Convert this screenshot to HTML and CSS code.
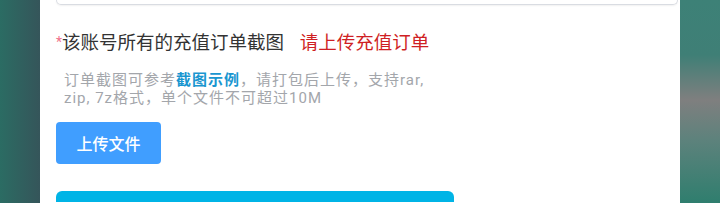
FILE: index.html
```html
<!DOCTYPE html>
<html lang="zh-CN">
<head>
    <meta charset="UTF-8">
    <meta name="viewport" content="width=device-width, initial-scale=1.0">
    <title>上传充值订单</title>
    <link rel="stylesheet" href="styles.css">
</head>
<body>
    <div class="backdrop">
        <div class="panel">
            <!-- bottom edge of the previous field, scrolled off -->
            <div class="prev-input"></div>

            <div class="field-title">
                <span class="star">*</span>该账号所有的充值订单截图
                <span class="warn">请上传充值订单</span>
            </div>

            <p class="hint">订单截图可参考<a href="#">截图示例</a>，请打包后上传，支持rar, zip, 7z格式，单个文件不可超过10M</p>

            <button class="upload-btn">上传文件</button>

            <div class="submit-bar"></div>
        </div>
    </div>
</body>
</html>
```

FILE: styles.css
```css
body {
    margin: 0;
    padding: 0;
    font-family: Roboto, "Noto Sans CJK SC", sans-serif;
    overflow: hidden;
}

.backdrop {
    display: flex;
    height: 203px;
    padding: 0 40px;
    overflow: hidden;
    background:
        linear-gradient(90deg, #2b6c63 0px, #35555a 40px, transparent 40px),
        linear-gradient(180deg, #3d8177 0px, #3f7f76 55px, #7f7f7f 100px, #5d827c 140px, #2f7e6e 203px);
}

.panel {
    flex: 1;
    display: flex;
    flex-direction: column;
    align-items: flex-start;
    background: #fff;
    padding: 0 2px 0 16px;
}

.panel > * {
    flex-shrink: 0;
}

.prev-input {
    align-self: stretch;
    height: 4px;
    border: 1px solid #d9dce2;
    border-top: none;
    border-radius: 0 0 5px 5px;
    box-shadow: 0 1px 2px rgba(0, 0, 0, 0.06);
}

.field-title {
    margin-top: 25px;
    font-size: 18.5px;
    line-height: 24px;
    color: #333;
}

.star {
    color: #f0708a;
    font-size: 14px;
    vertical-align: 2px;
}

.warn {
    margin-left: 11px;
    color: #cf1f24;
}

.hint {
    margin: 16px 0 0 8px;
    width: 368px;
    font-size: 15px;
    line-height: 18px;
    letter-spacing: 1px;
    color: #a3a6ab;
}

.hint a {
    color: #1a96d0;
    font-weight: 600;
    text-decoration: none;
}

.upload-btn {
    margin-top: 15px;
    width: 105px;
    height: 42px;
    border: none;
    border-radius: 4px;
    background: #409eff;
    color: #fff;
    font-family: "Noto Sans CJK SC", sans-serif;
    font-size: 16px;
    font-weight: 500;
    cursor: pointer;
}

/* submit button, cut off by the bottom of the view */
.submit-bar {
    margin-top: 27px;
    width: 398px;
    height: 11px;
    border-radius: 6px 6px 0 0;
    background: #00b4e6;
}
```
